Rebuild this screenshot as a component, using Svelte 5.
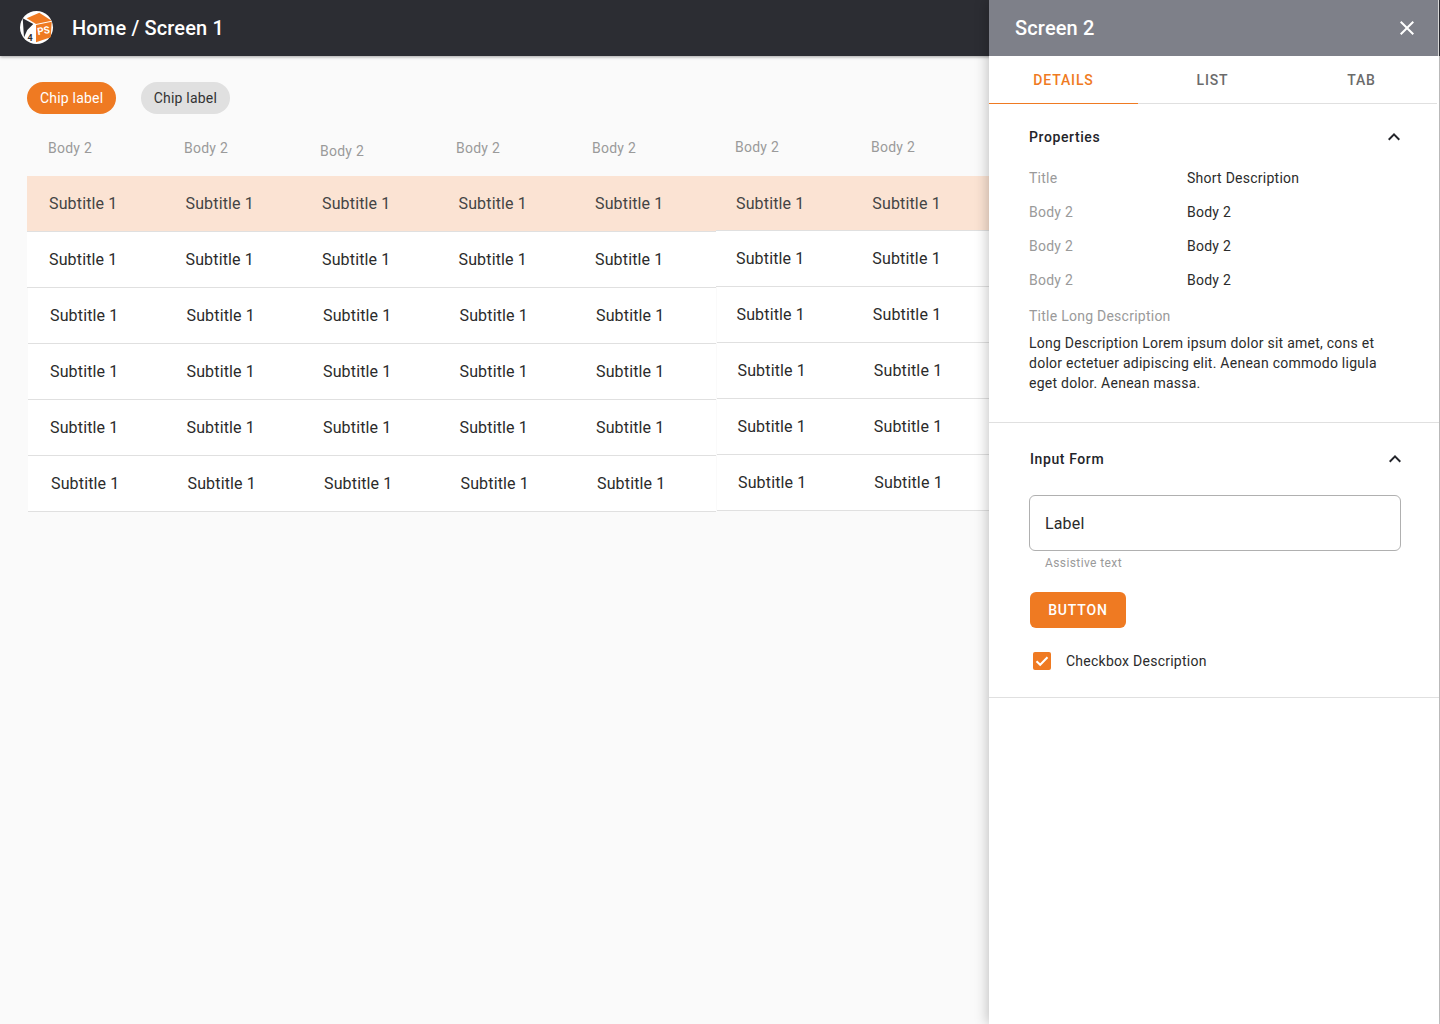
<script>
  const chips = [
    { label: 'Chip label', on: true },
    { label: 'Chip label', on: false }
  ];
  const heads = ['a', 'b', 'c', 'd', 'e'];
  const rows = [0, 1, 2, 3, 4, 5];
  const props = [
    ['Title', 'Short Description'],
    ['Body 2', 'Body 2'],
    ['Body 2', 'Body 2'],
    ['Body 2', 'Body 2']
  ];
</script>

<div class="page">
  <header class="topbar">
    <svg class="logo" width="34" height="34" viewBox="0 0 34 34">
      <circle cx="16.5" cy="16.5" r="16.5" fill="#fff" />
      <path d="M6.7 7.3 19.3 1.7 31.7 9.7 16 13Z" fill="#ef7a22" />
      <path d="M16 14 31.7 10.7 30.7 26.3 16 31.3Z" fill="#ef7a22" />
      <path d="M2.7 7.3 13.3 13 7.3 19 4 26.3Z" fill="#2c2d33" />
      <text x="18" y="24" transform="rotate(-10 18 24)" class="logo-ps">PS</text>
      <text x="7.5" y="30" class="logo-4">4</text>
    </svg>
    <h1>Home / Screen 1</h1>
  </header>

  <main class="content">
    <div class="chips">
      {#each chips as chip}
        <span class="chip" class:on={chip.on}>{chip.label}</span>
      {/each}
    </div>

    <div class="table">
      <div class="group left">
        <div class="head">
          {#each heads as h}
            <span class="hcell {h}">Body 2</span>
          {/each}
        </div>
        {#each rows as r}
          <div class="row r{r}">
            {#each heads as h}
              <span class="cell">Subtitle 1</span>
            {/each}
          </div>
        {/each}
      </div>
      <div class="group right">
        <div class="head">
          <span class="hcell">Body 2</span>
          <span class="hcell">Body 2</span>
        </div>
        {#each rows as r}
          <div class="row r{r}">
            <span class="cell">Subtitle 1</span>
            <span class="cell">Subtitle 1</span>
          </div>
        {/each}
      </div>
    </div>
  </main>

  <aside class="panel">
    <div class="panel-head">
      <h2>Screen 2</h2>
      <svg width="24" height="24" viewBox="0 0 24 24"><path d="M19 6.41 17.59 5 12 10.59 6.41 5 5 6.41 10.59 12 5 17.59 6.41 19 12 13.41 17.59 19 19 17.59 13.41 12z" fill="#fff" /></svg>
    </div>
    <nav class="tabs">
      <span class="tab active">DETAILS</span>
      <span class="tab">LIST</span>
      <span class="tab">TAB</span>
    </nav>

    <section class="sec props">
      <div class="sec-title">
        <span>Properties</span>
        <svg width="24" height="24" viewBox="0 0 24 24"><path d="M7.41 15.41 12 10.83l4.59 4.58L18 14l-6-6-6 6z" fill="#23242a" /></svg>
      </div>
      <dl>
        {#each props as p}
          <div class="prop">
            <dt>{p[0]}</dt>
            <dd>{p[1]}</dd>
          </div>
        {/each}
      </dl>
      <div class="long-title">Title Long Description</div>
      <p>Long Description Lorem ipsum dolor sit amet, cons et dolor ectetuer adipiscing elit. Aenean commodo ligula eget dolor. Aenean massa.</p>
    </section>

    <section class="sec form">
      <div class="sec-title">
        <span>Input Form</span>
        <svg width="24" height="24" viewBox="0 0 24 24"><path d="M7.41 15.41 12 10.83l4.59 4.58L18 14l-6-6-6 6z" fill="#23242a" /></svg>
      </div>
      <div class="field">Label</div>
      <div class="assist">Assistive text</div>
      <button class="btn">BUTTON</button>
      <label class="check">
        <span class="box">
          <svg width="18" height="18" viewBox="0 0 18 18"><path d="M3.5 9.2 7.2 12.8 14.5 5.2" fill="none" stroke="#fff" stroke-width="2" /></svg>
        </span>
        <span>Checkbox Description</span>
      </label>
    </section>
  </aside>
</div>

<style>
  :global(body) {
    margin: 0;
    background: #fafafa;
    font-family: Roboto, "Liberation Sans", sans-serif;
  }
  .page {
    position: relative;
    width: 1440px;
    height: 1024px;
    overflow: hidden;
    background: #fafafa;
  }
  .topbar {
    height: 56px;
    background: #2c2d33;
    display: flex;
    align-items: center;
    padding-left: 20px;
    gap: 18px;
    box-shadow: 0 1px 3px rgba(0, 0, 0, 0.35);
  }
  .logo-ps {
    font: 700 10px "Roboto", sans-serif;
    fill: #fff;
  }
  .logo-4 {
    font: 700 9px "Roboto", sans-serif;
    fill: #2c2d33;
  }
  h1 {
    margin: 0;
    font-size: 20px;
    font-weight: 500;
    letter-spacing: 0.15px;
    color: #fff;
  }
  .content {
    padding: 26px 0 0 27px;
    height: 968px;
    box-sizing: border-box;
    border-right: 1px solid #c8c8c8;
  }
  .chips {
    display: flex;
    gap: 25px;
  }
  .chip {
    height: 32px;
    line-height: 32px;
    padding: 0 12.5px 0 13px;
    border-radius: 16px;
    background: #e0e0e0;
    color: #333;
    font-size: 14px;
    letter-spacing: 0.2px;
  }
  .chip.on {
    background: #ef7a22;
    color: #fff;
  }
  .table {
    display: flex;
    margin-top: 12px;
  }
  .group.left {
    width: 689px;
  }
  .group.right {
    width: 273px;
    margin-top: -1px;
  }
  .head {
    display: grid;
    grid-template-columns: repeat(5, 136px);
    height: 50px;
    padding-left: 21px;
    box-sizing: border-box;
    padding-top: 12px;
    align-items: start;
  }
  .right .head {
    grid-template-columns: repeat(2, 136px);
    padding-left: 19px;
    height: 51px;
  }
  .hcell {
    font-size: 14px;
    letter-spacing: 0.25px;
    line-height: 20px;
    color: #9a9a9a;
  }
  .hcell.c {
    margin-top: 3px;
  }
  .row {
    display: grid;
    grid-template-columns: repeat(5, 136.5px);
    align-items: center;
    height: 56px;
    box-sizing: border-box;
    padding-left: 22px;
    background: #fff;
    border-bottom: 1px solid #e0e0e0;
    color: #2b2b2b;
    font-size: 16px;
    letter-spacing: 0.15px;
  }
  .right .row {
    grid-template-columns: repeat(2, 136.3px);
    padding-left: 20px;
  }
  .right .row.r0 {
    height: 55px;
  }
  .row.r0 {
    background: #fbe3d3;
    color: #444;
  }
  .row.r2,
  .row.r3,
  .row.r4 {
    margin-left: 1px;
  }
  .row.r5 {
    margin-left: 1px;
    padding-left: 23px;
  }
  .right .row.r2 {
    padding-left: 19.5px;
  }
  .right .row.r3,
  .right .row.r4 {
    padding-left: 20.5px;
  }
  .right .row.r5 {
    padding-left: 21px;
  }
  .panel {
    position: absolute;
    top: 0;
    left: 989px;
    width: 450px;
    height: 1024px;
    background: #fff;
    box-shadow: -2px 0 12px rgba(0, 0, 0, 0.22);
  }
  .panel-head {
    height: 56px;
    width: 450px;
    background: #7e8089;
    border-right: 1px solid #d8d8d8;
    display: flex;
    align-items: center;
    justify-content: space-between;
    padding: 0 19px 0 26px;
    box-sizing: border-box;
    color: #fff;
  }
  h2 {
    margin: 0;
    font-size: 20px;
    font-weight: 500;
    letter-spacing: 0.15px;
  }
  .tabs {
    display: grid;
    grid-template-columns: repeat(3, 149px);
    height: 48px;
    width: 448px;
    box-sizing: border-box;
    border-bottom: 1px solid #e0e0e0;
  }
  .tab {
    height: 48px;
    box-sizing: border-box;
    display: flex;
    align-items: center;
    justify-content: center;
    font-size: 14px;
    font-weight: 500;
    letter-spacing: 0.85px;
    color: #6b6b6b;
  }
  .tab.active {
    color: #ef7a22;
    border-bottom: 1px solid #ef7a22;
  }
  .sec {
    border-bottom: 1px solid #e0e0e0;
    box-sizing: border-box;
  }
  .props {
    height: 319px;
    padding: 21px 33px 0 40px;
  }
  .form {
    height: 275px;
    padding: 24px 32px 0 41px;
  }
  .sec-title {
    display: flex;
    align-items: center;
    justify-content: space-between;
    height: 24px;
    font-size: 14px;
    font-weight: 500;
    letter-spacing: 0.6px;
    color: #23242a;
  }
  dl {
    margin: 19px 0 0;
  }
  .prop {
    display: flex;
    height: 34px;
    font-size: 14px;
    line-height: 20px;
    letter-spacing: 0.25px;
  }
  dt {
    width: 158px;
    color: #9a9a9a;
  }
  dd {
    margin: 0;
    color: #2b2b2b;
  }
  .long-title {
    font-size: 14px;
    line-height: 20px;
    letter-spacing: 0.25px;
    color: #9a9a9a;
    margin-top: 2px;
  }
  p {
    margin: 7px 0 0;
    width: 370px;
    font-size: 14px;
    line-height: 20px;
    letter-spacing: 0.25px;
    color: #2b2b2b;
  }
  .field {
    margin: 24px 0 0 -1px;
    width: 372px;
    height: 56px;
    box-sizing: border-box;
    border: 1px solid #b0b0b0;
    border-radius: 6px;
    padding: 0 15px;
    display: flex;
    align-items: center;
    font-size: 16px;
    letter-spacing: 0.15px;
    color: #2b2b2b;
  }
  .assist {
    margin: 4px 0 0 15px;
    font-size: 12px;
    line-height: 16px;
    letter-spacing: 0.4px;
    color: #9a9a9a;
  }
  .btn {
    display: block;
    margin-top: 21px;
    width: 96px;
    height: 36px;
    border: 0;
    border-radius: 6px;
    background: #ef7a22;
    color: #fff;
    font: 500 14px Roboto, sans-serif;
    letter-spacing: 0.85px;
  }
  .check {
    display: flex;
    align-items: center;
    margin: 21px 0 0 3px;
    height: 24px;
    gap: 15px;
    font-size: 14px;
    letter-spacing: 0.25px;
    color: #2b2b2b;
  }
  .box {
    width: 18px;
    height: 18px;
    border-radius: 2px;
    background: #ef7a22;
    display: flex;
  }
</style>
